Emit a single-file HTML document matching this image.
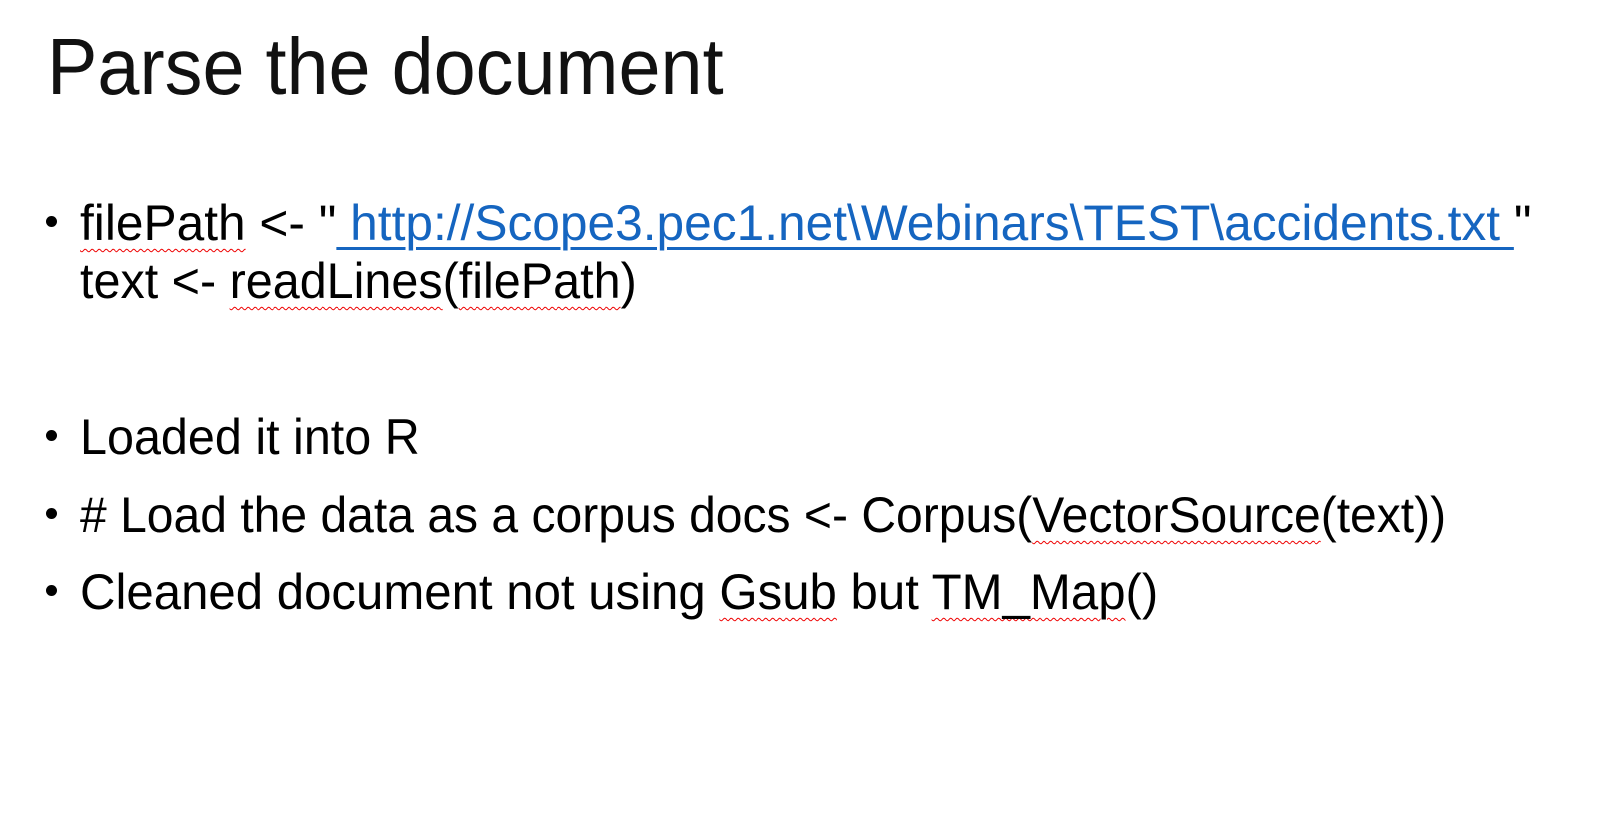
<!DOCTYPE html>
<html><head><meta charset="utf-8"><style>
html,body{margin:0;padding:0;background:#fff;}
body{width:1610px;height:838px;position:relative;overflow:hidden;font-family:"Liberation Sans",sans-serif;color:#000;}
.t{position:absolute;left:47px;top:27px;font-size:80px;line-height:80px;white-space:nowrap;transform:scaleX(0.945);transform-origin:left;color:#111;}
.l{position:absolute;left:80px;font-size:50px;line-height:50px;white-space:nowrap;transform:scaleX(0.97);transform-origin:left;}
.b{position:absolute;left:46px;width:11px;height:11px;border-radius:50%;background:#000;}
.w{text-decoration:underline wavy #e00;text-decoration-thickness:1px;text-underline-offset:8px;}
a{color:#1565c0;text-decoration:underline;text-decoration-thickness:3px;text-underline-offset:7px;}
</style></head><body>
<div class="t">Parse the document</div>
<div class="b" style="top:216px"></div>
<div class="l" style="top:198px;transform:scaleX(0.993)"><span class="w">filePath</span> &lt;- "<a> http://Scope3.pec1.net\Webinars\TEST\accidents.txt </a>"</div>
<div class="l" style="top:256px">text &lt;- <span class="w">readLines</span>(<span class="w">filePath</span>)</div>
<div class="b" style="top:430px"></div>
<div class="l" style="top:412px">Loaded it into R</div>
<div class="b" style="top:508px"></div>
<div class="l" style="top:490px;transform:scaleX(0.961)"># Load the data as a corpus docs &lt;- Corpus(<span class="w">VectorSource</span>(text))</div>
<div class="b" style="top:585px"></div>
<div class="l" style="top:567px;transform:scaleX(0.983)">Cleaned document not using <span class="w">Gsub</span> but <span class="w">TM_Map</span>()</div>
</body></html>
